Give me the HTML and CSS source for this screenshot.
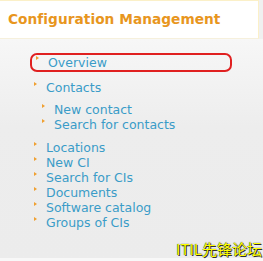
FILE: index.html
```html
<!DOCTYPE html>
<html>
<head>
<meta charset="utf-8">
<link rel="stylesheet" href="styles.css">
</head>
<body>
<div class="page">
  <div class="header"><h1 class="title">Configuration Management</h1></div>
  <div class="panel">
    <ul class="menu">
      <li class="item current"><span class="link">Overview</span></li>
      <li class="item group"><span class="link">Contacts</span>
        <ul class="sub">
          <li class="item"><span class="link">New contact</span></li>
          <li class="item"><span class="link">Search for contacts</span></li>
        </ul>
      </li>
      <li class="item"><span class="link">Locations</span></li>
      <li class="item"><span class="link">New CI</span></li>
      <li class="item"><span class="link">Search for CIs</span></li>
      <li class="item"><span class="link">Documents</span></li>
      <li class="item"><span class="link">Software catalog</span></li>
      <li class="item"><span class="link">Groups of CIs</span></li>
    </ul>
    <div class="watermark">ITIL先锋论坛</div>
  </div>
</div>
</body>
</html>
```
FILE: styles.css
```css
html, body { margin: 0; padding: 0; }
body { width: 263px; height: 261px; overflow: hidden; font-family: "DejaVu Sans", sans-serif; background: #f0f0f0; }
.page { display: flex; flex-direction: column; height: 261px; }
.header { height: 39px; background: #fff; border-top: 1px solid #fbf0c8; border-right: 1px solid #fbf0c8; border-bottom: 1px solid #f6f0dc; width: 259px; box-sizing: border-box; display: flex; align-items: center; padding-left: 8px; }
.title { margin: 0; font-size: 13.7px; letter-spacing: 0.05px; font-weight: bold; color: #e8961e; padding-bottom: 1px; }
.panel { flex: 1; background: linear-gradient(#f7f7f7, #ededed 40%, #ececec); border-bottom: 3px solid #f8f8f8; display: flex; flex-direction: column; }
.menu { list-style: none; margin: 0; padding: 14px 0 0 30px; }
.sub { list-style: none; margin: 0 0 0 -8px; padding: 7px 0 0 0; }
.item { font-size: 12.5px; line-height: 15px; color: #3a9cc8; position: relative; padding-left: 16px; }
.item::before { content: ""; position: absolute; left: 4px; top: 2px; border-left: 3px solid #f0a030; border-top: 2.5px solid transparent; border-bottom: 2.5px solid transparent; }
.current { width: 202px; height: 19px; box-sizing: border-box; border: 2px solid #e02020; border-radius: 7px; margin-bottom: 8px; padding-left: 16px; line-height: 15px; }
.current::before { left: 4px; top: 1px; }
.group { margin-bottom: 8px; }
.watermark { margin-top: auto; align-self: flex-end; font-family: "Noto Sans CJK SC", sans-serif; font-size: 15px; line-height: 18px; color: #ffff00; text-shadow: 0 0 1px #000, 1px 1px 0 #333; padding-right: 1px; }
```
